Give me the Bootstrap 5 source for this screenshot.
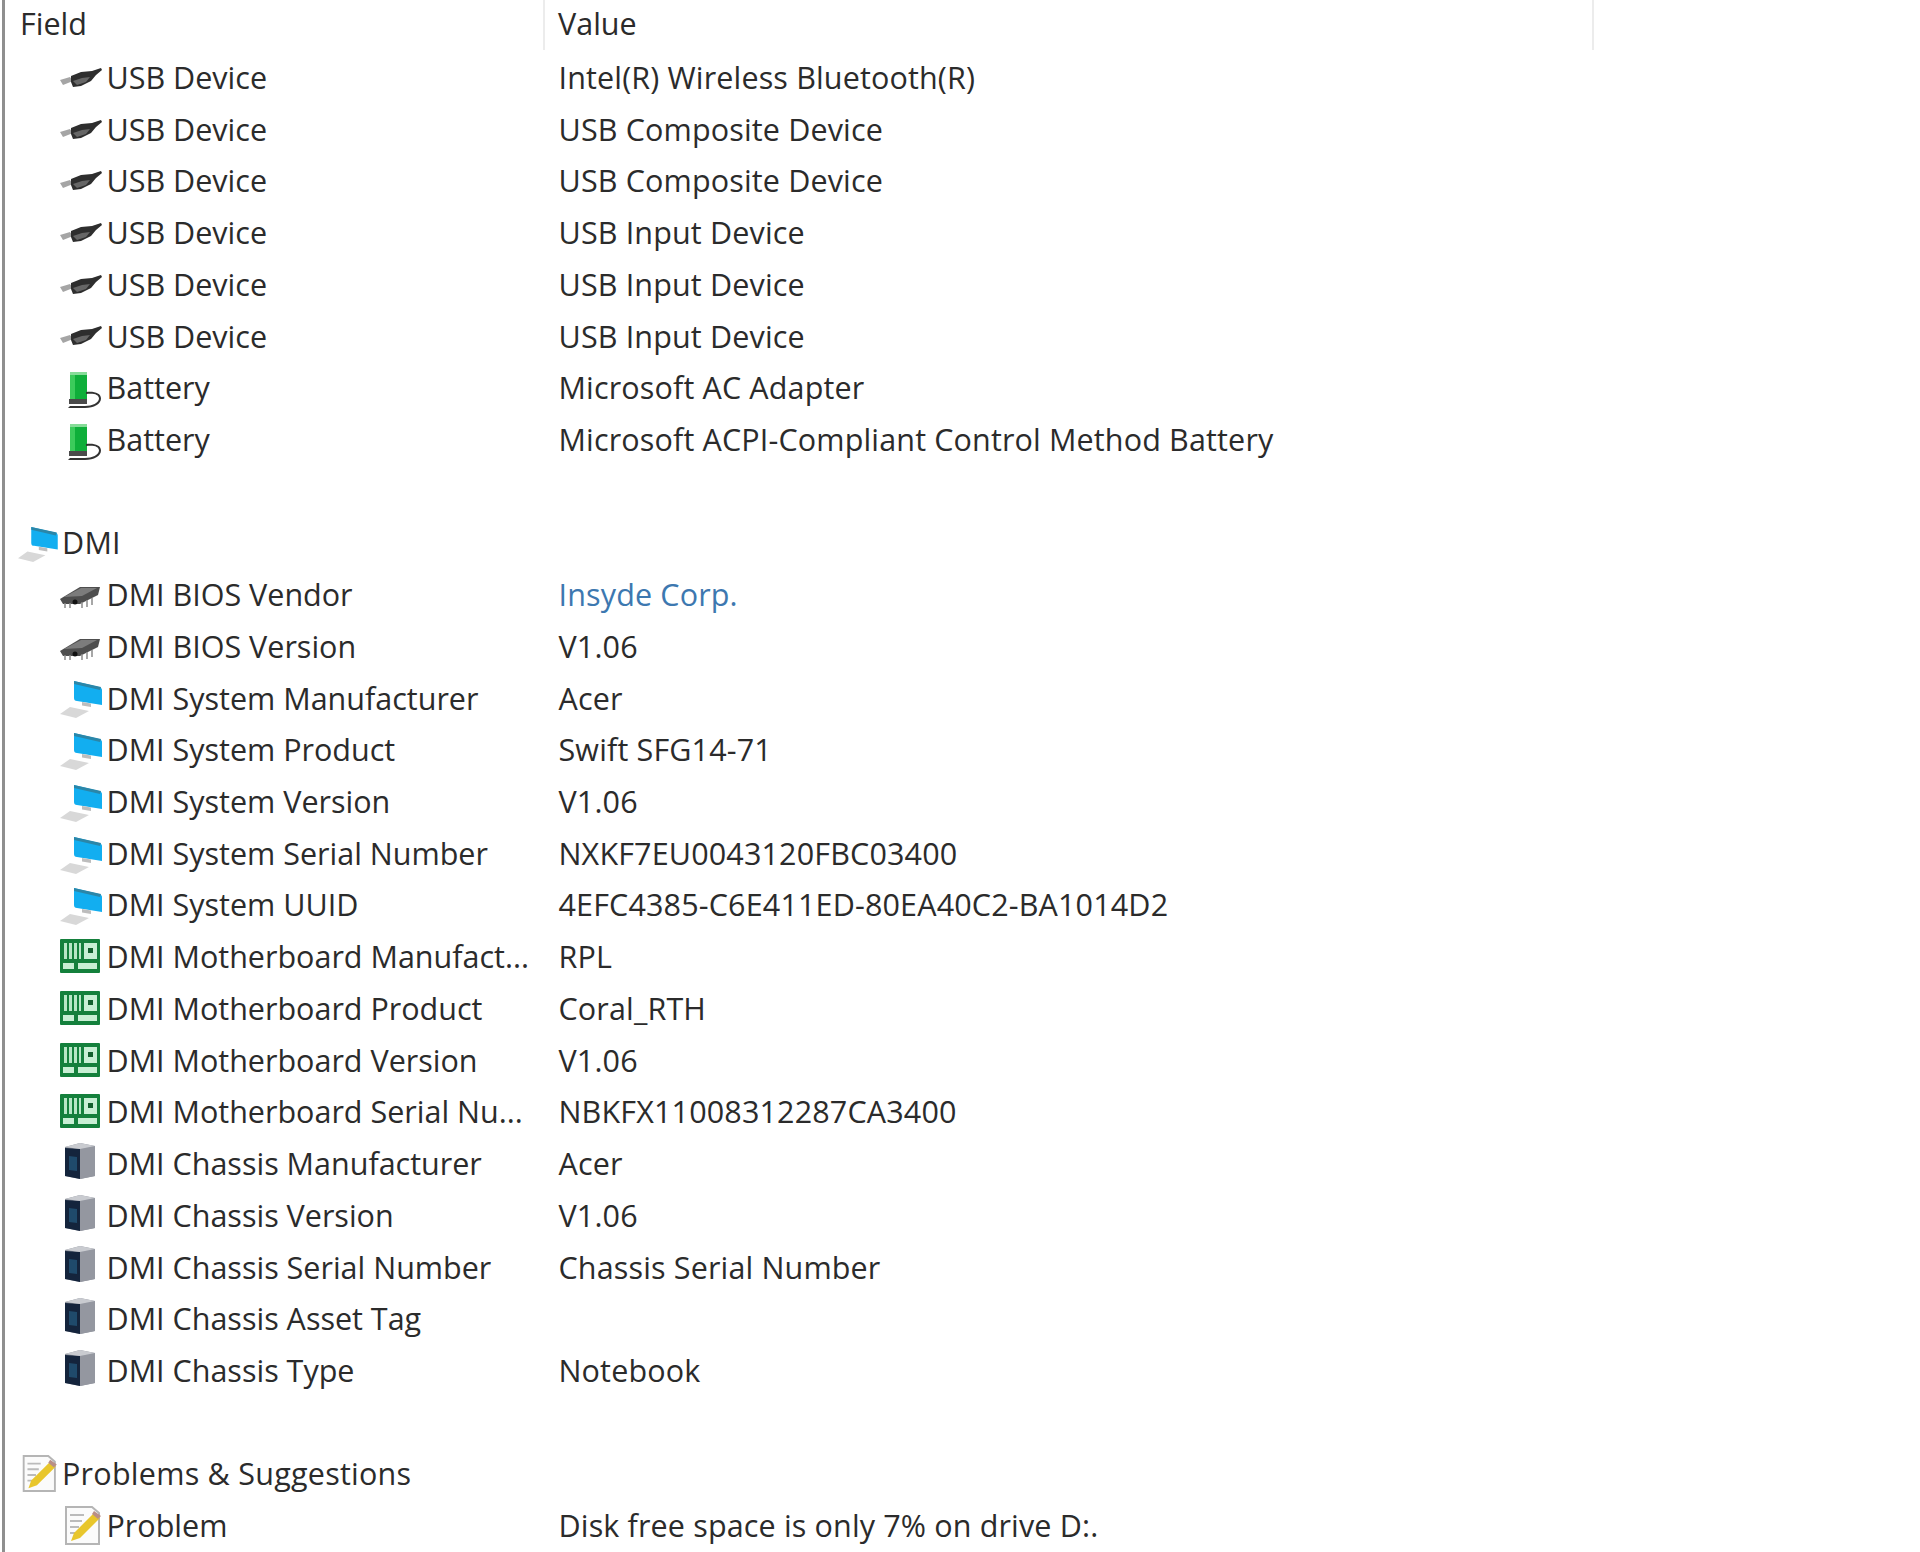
<!DOCTYPE html>
<html lang="en"><head><meta charset="utf-8"><title>Report</title>
<link href="https://cdn.jsdelivr.net/npm/bootstrap@5.3.0/dist/css/bootstrap.min.css" rel="stylesheet">
<style>
html,body{height:100%;margin:0;background:#fff}
body{font-family:"Open Sans","Noto Sans",sans-serif;font-size:30.5px;color:#2b2b2b;overflow:hidden}
.sheet{height:1552px;border-left:3px solid #8f8f8f;margin-left:2px;overflow:hidden}
.hdr{height:52px;width:1589px;align-items:flex-start}
.fcol{width:538px;flex:none;padding-left:15px;height:48px;display:flex;align-items:center}
.vcol{flex:1 1 0;border-left:2px solid #ececec;border-right:2px solid #ececec;height:50px;display:flex;align-items:center;padding-left:13px;padding-bottom:3px}
.trow{height:51.73px;align-items:center;white-space:nowrap}
.lvl2{padding-left:55px}
.lvl1{padding-left:13px}
.lab{width:483.5px;flex:none;display:flex;align-items:center;overflow:hidden}
.lvl1 .lab{width:525.5px;letter-spacing:.25px}
.glyph{width:46.5px;height:44px;flex:none}
.lvl1 .glyph{width:44px}
.val{padding-left:15px;letter-spacing:.15px}
.vlink{color:#3d78b0}
.gap{height:51.73px}
</style></head><body>
<svg width="0" height="0" class="d-block"><defs>
<g id="usb"><path d="M0 24l10-3 3 4-10 4z" fill="#a5a5a5"/><path d="M11 20l10-4 11-1 9-3 1 2-6 5-5 6-10 5-8 1-2-5z" fill="#2e2e2e"/><path d="M13 25l9-3 8-1-4 5-9 3z" fill="#666"/></g>
<g id="bat"><path d="M10 7h17v26H10z" fill="#0eaf3a"/><path d="M10 7h5v26h-5z" fill="#3bcb5b"/><path d="M10 6h17v3H10z" fill="#86dc98"/><path d="M26 28c7-1 13 0 13 4.500s-7 7.500-14 7.500H10l-2 2h17c9 0 16-4 16-9.500S34 25 26 26z" fill="#333"/><path d="M9 33h18v5H9z" fill="#4a4a4a"/></g>
<g id="pc"><path d="M0 38l10-7 19 4-13 7z" fill="#d8d8d8"/><path d="M14 5l25 6c2 0 3 2 3 3v15l-25-4c-2 0-3-1-3-3z" fill="#12aef0"/><path d="M14 5l27 6-1 3-26-6z" fill="#2b86a8"/><path d="M22 26l9 1.500v3.500l-9-1.500z" fill="#bdbdbd"/></g>
<g id="chip"><path d="M0 26l20-12 20 0-2 8-18 9-17 0z" fill="#4e4e4e"/><path d="M4 24l17-9 16 0-15 8z" fill="#7c7c7c"/><circle cx="15" cy="29" r="2.500" fill="#111"/><path d="M5 30v5M10 30v5M22 29v6M27 27v7M32 25v7" stroke="#8a8a8a" stroke-width="1.500"/></g>
<g id="mb"><rect y="4" width="40" height="34" rx="1" fill="#14803c"/><path d="M4 8h3v16H4zM9 8h3v16H9zM14 8h3v16h-3zM19 8h2v16h-2z" fill="#b8e6c6"/><rect x="24" y="8" width="13" height="16" fill="#c8efd4"/><rect x="28" y="13" width="5" height="5" fill="#14602e"/><rect x="3" y="28" width="11" height="6" fill="#c8efd4"/><rect x="18" y="28" width="19" height="6" fill="#c8efd4"/></g>
<g id="box"><path d="M5 5l15-4 15 3v30l-15 3-15-3z" fill="#8a8f99"/><path d="M5 6l15 1v30L5 34z" fill="#14243c"/><path d="M9 14l8 1v14l-8-1z" fill="#1f4a6b"/><path d="M20 7l15-3v30l-15 3z" fill="#9497a0"/><path d="M5 5l15-4 15 3-15 3z" fill="#c9cbd0"/></g>
<g id="note"><path d="M6 3h26l7 6v31H6z" fill="#fbfbfb" stroke="#b5b5b5" stroke-width="2"/><path d="M10 11h14M10 17h12M10 23h9M10 29h7" stroke="#bbb" stroke-width="2"/><path d="M34 9l6 5-20 20-9 3 3-8z" fill="#e8c62c"/><path d="M34 7l7 5-3 3-6-5z" fill="#b98f86"/></g>
</defs></svg>
<main class="sheet" id="sheet">
<div class="d-flex hdr"><div class="fcol">Field</div><div class="vcol">Value</div></div>
<div id="tree"></div>
</main>
<script>
const rows=[
["usb","USB Device","Intel(R) Wireless Bluetooth(R)"],["usb","USB Device","USB Composite Device"],["usb","USB Device","USB Composite Device"],["usb","USB Device","USB Input Device"],["usb","USB Device","USB Input Device"],["usb","USB Device","USB Input Device"],["bat","Battery","Microsoft AC Adapter"],["bat","Battery","Microsoft ACPI-Compliant Control Method Battery"],null,
["pc","DMI","",1],["chip","DMI BIOS Vendor","Insyde Corp.",0,1],["chip","DMI BIOS Version","V1.06"],["pc","DMI System Manufacturer","Acer"],["pc","DMI System Product","Swift SFG14-71"],["pc","DMI System Version","V1.06"],["pc","DMI System Serial Number","NXKF7EU0043120FBC03400"],["pc","DMI System UUID","4EFC4385-C6E411ED-80EA40C2-BA1014D2"],["mb","DMI Motherboard Manufact...","RPL"],["mb","DMI Motherboard Product","Coral_RTH"],["mb","DMI Motherboard Version","V1.06"],["mb","DMI Motherboard Serial Nu...","NBKFX11008312287CA3400"],["box","DMI Chassis Manufacturer","Acer"],["box","DMI Chassis Version","V1.06"],["box","DMI Chassis Serial Number","Chassis Serial Number"],["box","DMI Chassis Asset Tag",""],["box","DMI Chassis Type","Notebook"],null,
["note","Problems &amp; Suggestions","",1],["note","Problem","Disk free space is only 7% on drive D:."]];
document.getElementById('tree').innerHTML=rows.map(r=>{
 if(!r)return '<div class="gap"></div>';
 return `<div class="d-flex trow ${r[3]?'lvl1':'lvl2'}"><div class="lab"><svg class="glyph" viewBox="0 0 46.5 44" preserveAspectRatio="xMinYMid meet"><use href="#${r[0]}"/></svg><span>${r[1]}</span></div><div class="val ${r[4]?'vlink':''}">${r[2]}</div></div>`}).join('');
</script>
<script src="https://cdn.jsdelivr.net/npm/bootstrap@5.3.0/dist/js/bootstrap.bundle.min.js"></script>
</body></html>
